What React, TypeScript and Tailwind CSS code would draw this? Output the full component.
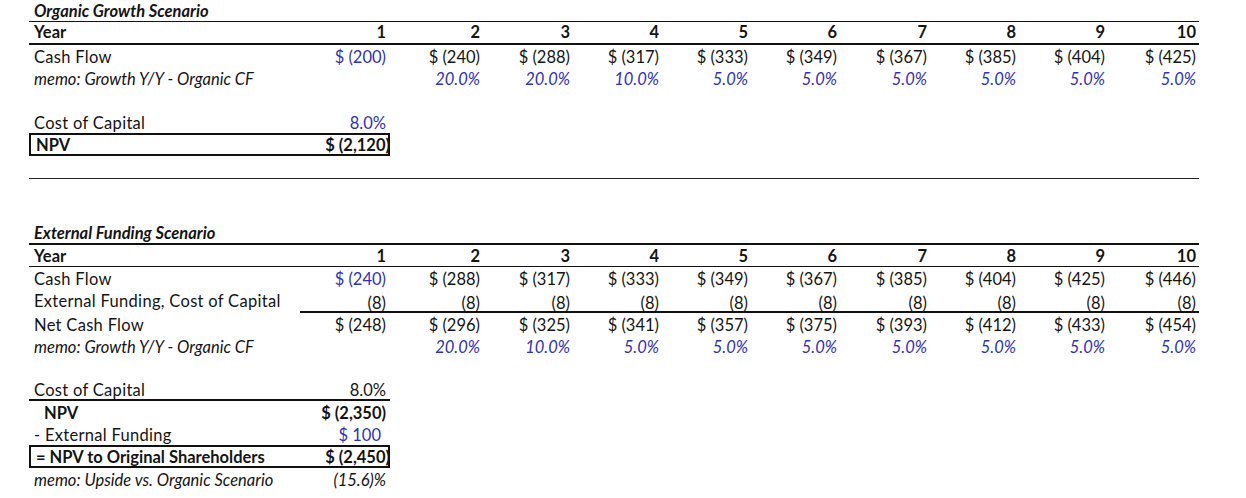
const BLUE = 'text-[#2f2fc0]';

const cols = 'grid grid-cols-[271px_90px_90px_90px_89px_89px_89px_90px_89px_89px_94px]';

type Cell = { v: string; blue?: boolean; italic?: boolean; bold?: boolean };

function DataRow({
  label,
  cells,
  labelClass = 'pb-[2px]',
  rowClass = 'h-[22px]',
  cellClass = 'pb-[2px]',
}: {
  label: string;
  cells: Cell[];
  labelClass?: string;
  rowClass?: string;
  cellClass?: string;
}) {
  return (
    <div className={`${cols} ${rowClass}`}>
      <div className={`flex items-end pl-[5px] whitespace-nowrap ${labelClass}`}>{label}</div>
      {cells.map((c, i) => (
        <div
          key={i}
          className={`flex items-end justify-end whitespace-nowrap ${i === 0 ? 'pr-1' : i === 9 ? 'pr-[3px]' : 'pr-0'} ${
            c.blue ? BLUE : ''
          } ${c.italic ? 'italic' : ''} ${c.bold ? 'font-bold' : ''} ${cellClass}`}
        >
          {c.v}
        </div>
      ))}
    </div>
  );
}

const years: Cell[] = Array.from({ length: 10 }, (_, i) => ({ v: String(i + 1), bold: true }));

const money = (vals: number[], firstBlue = true): Cell[] =>
  vals.map((n, i) => ({ v: `$ (${n})`, blue: firstBlue && i === 0 }));

const pct = (vals: (string | null)[]): Cell[] =>
  vals.map((v) => ({ v: v ?? '', blue: true, italic: true }));

function SummaryRow({
  label,
  value,
  className = '',
  labelClass = 'pb-[2px]',
  valueClass = 'pb-[2px]',
}: {
  label: string;
  value: string;
  className?: string;
  labelClass?: string;
  valueClass?: string;
}) {
  return (
    <div className={`grid grid-cols-[271px_90px] w-[361px] ${className}`}>
      <div className={`flex items-end pl-[5px] whitespace-nowrap ${labelClass}`}>{label}</div>
      <div className={`flex items-end justify-end pr-1 whitespace-nowrap ${valueClass}`}>{value}</div>
    </div>
  );
}

export default function App() {
  return (
    <div
      className="w-[1246px] h-[498px] bg-white text-[#141414] text-[16.5px] leading-none overflow-hidden"
      style={{ fontFamily: 'Lato, "Open Sans", sans-serif' }}
    >
      <div className="ml-[29px] w-[1170px]">
        {/* Organic scenario */}
        <div className="h-[22px] border-b border-[#111] flex items-end pb-[2px] pl-[5px] italic font-bold">
          Organic Growth Scenario
        </div>
        <DataRow
          label="Year"
          labelClass="font-bold pb-[3px]"
          cellClass="pb-[3px]"
          cells={years}
          rowClass="h-[23px] border-b-2 border-[#111]"
        />
        <DataRow
          label="Cash Flow"
          labelClass="tracking-[0.3px] pb-[2px]"
          cells={money([200, 240, 288, 317, 333, 349, 367, 385, 404, 425])}
        />
        <DataRow
          label="memo: Growth Y/Y - Organic CF"
          labelClass="italic pb-[2px]"
          cells={pct([null, '20.0%', '20.0%', '10.0%', '5.0%', '5.0%', '5.0%', '5.0%', '5.0%', '5.0%'])}
        />
        <div className="h-[22px]" />
        <SummaryRow
          label="Cost of Capital"
          value="8.0%"
          className="h-[22px]"
          labelClass="tracking-[0.3px] pb-[2px]"
          valueClass={`${BLUE} pb-[2px]`}
        />
        <SummaryRow
          label="NPV"
          value="$ (2,120)"
          className="h-[23px] border-2 border-[#111] font-bold"
          labelClass="pl-[3px] pb-[1px]"
          valueClass="pr-[2px] pb-[1px]"
        />
        <div className="h-[23px] border-b border-[#222]" />

        {/* External funding scenario */}
        <div className="h-[44px]" />
        <div className="h-[22px] border-b-2 border-[#111] flex items-end pb-[2px] pl-[5px] italic font-bold">
          External Funding Scenario
        </div>
        <DataRow
          label="Year"
          labelClass="font-bold pb-[2px]"
          cells={years}
          rowClass="h-[22px] border-b border-[#111]"
        />
        <DataRow
          label="Cash Flow"
          labelClass="tracking-[0.3px] pb-[2px]"
          cells={money([240, 288, 317, 333, 349, 367, 385, 404, 425, 446])}
        />
        <DataRow
          label="External Funding, Cost of Capital"
          labelClass="tracking-[0.3px] pb-[4px]"
          rowClass="h-[24px]"
          cells={Array.from({ length: 10 }, () => ({ v: '(8)' }))}
          cellClass="border-b-2 border-[#111] pb-[0px]"
        />
        <DataRow
          label="Net Cash Flow"
          labelClass="tracking-[0.3px] pb-[2px]"
          cells={money([248, 296, 325, 341, 357, 375, 393, 412, 433, 454], false)}
        />
        <DataRow
          label="memo: Growth Y/Y - Organic CF"
          labelClass="italic pb-[2px]"
          cells={pct([null, '20.0%', '10.0%', '5.0%', '5.0%', '5.0%', '5.0%', '5.0%', '5.0%', '5.0%'])}
        />
        <div className="h-[22px]" />
        <SummaryRow
          label="Cost of Capital"
          value="8.0%"
          className="h-[22px] border-b-2 border-[#111]"
          labelClass="tracking-[0.3px] pb-[1px]"
          valueClass="pb-[1px]"
        />
        <SummaryRow
          label="NPV"
          value="$ (2,350)"
          className="h-[22px] font-bold"
          labelClass="pl-[15px] pb-[2px]"
        />
        <SummaryRow
          label="- External Funding"
          value="$ 100"
          className="h-[22px]"
          labelClass="tracking-[0.3px] pb-[2px]"
          valueClass={`${BLUE} pr-[9px] pb-[2px]`}
        />
        <SummaryRow
          label="= NPV to Original Shareholders"
          value="$ (2,450)"
          className="h-[23px] border-2 border-[#111] font-bold"
          labelClass="pl-[3px] pb-[1px]"
          valueClass="pr-[2px] pb-[1px]"
        />
        <SummaryRow
          label="memo: Upside vs. Organic Scenario"
          value="(15.6)%"
          className="h-[22px] italic"
        />
      </div>
    </div>
  );
}
